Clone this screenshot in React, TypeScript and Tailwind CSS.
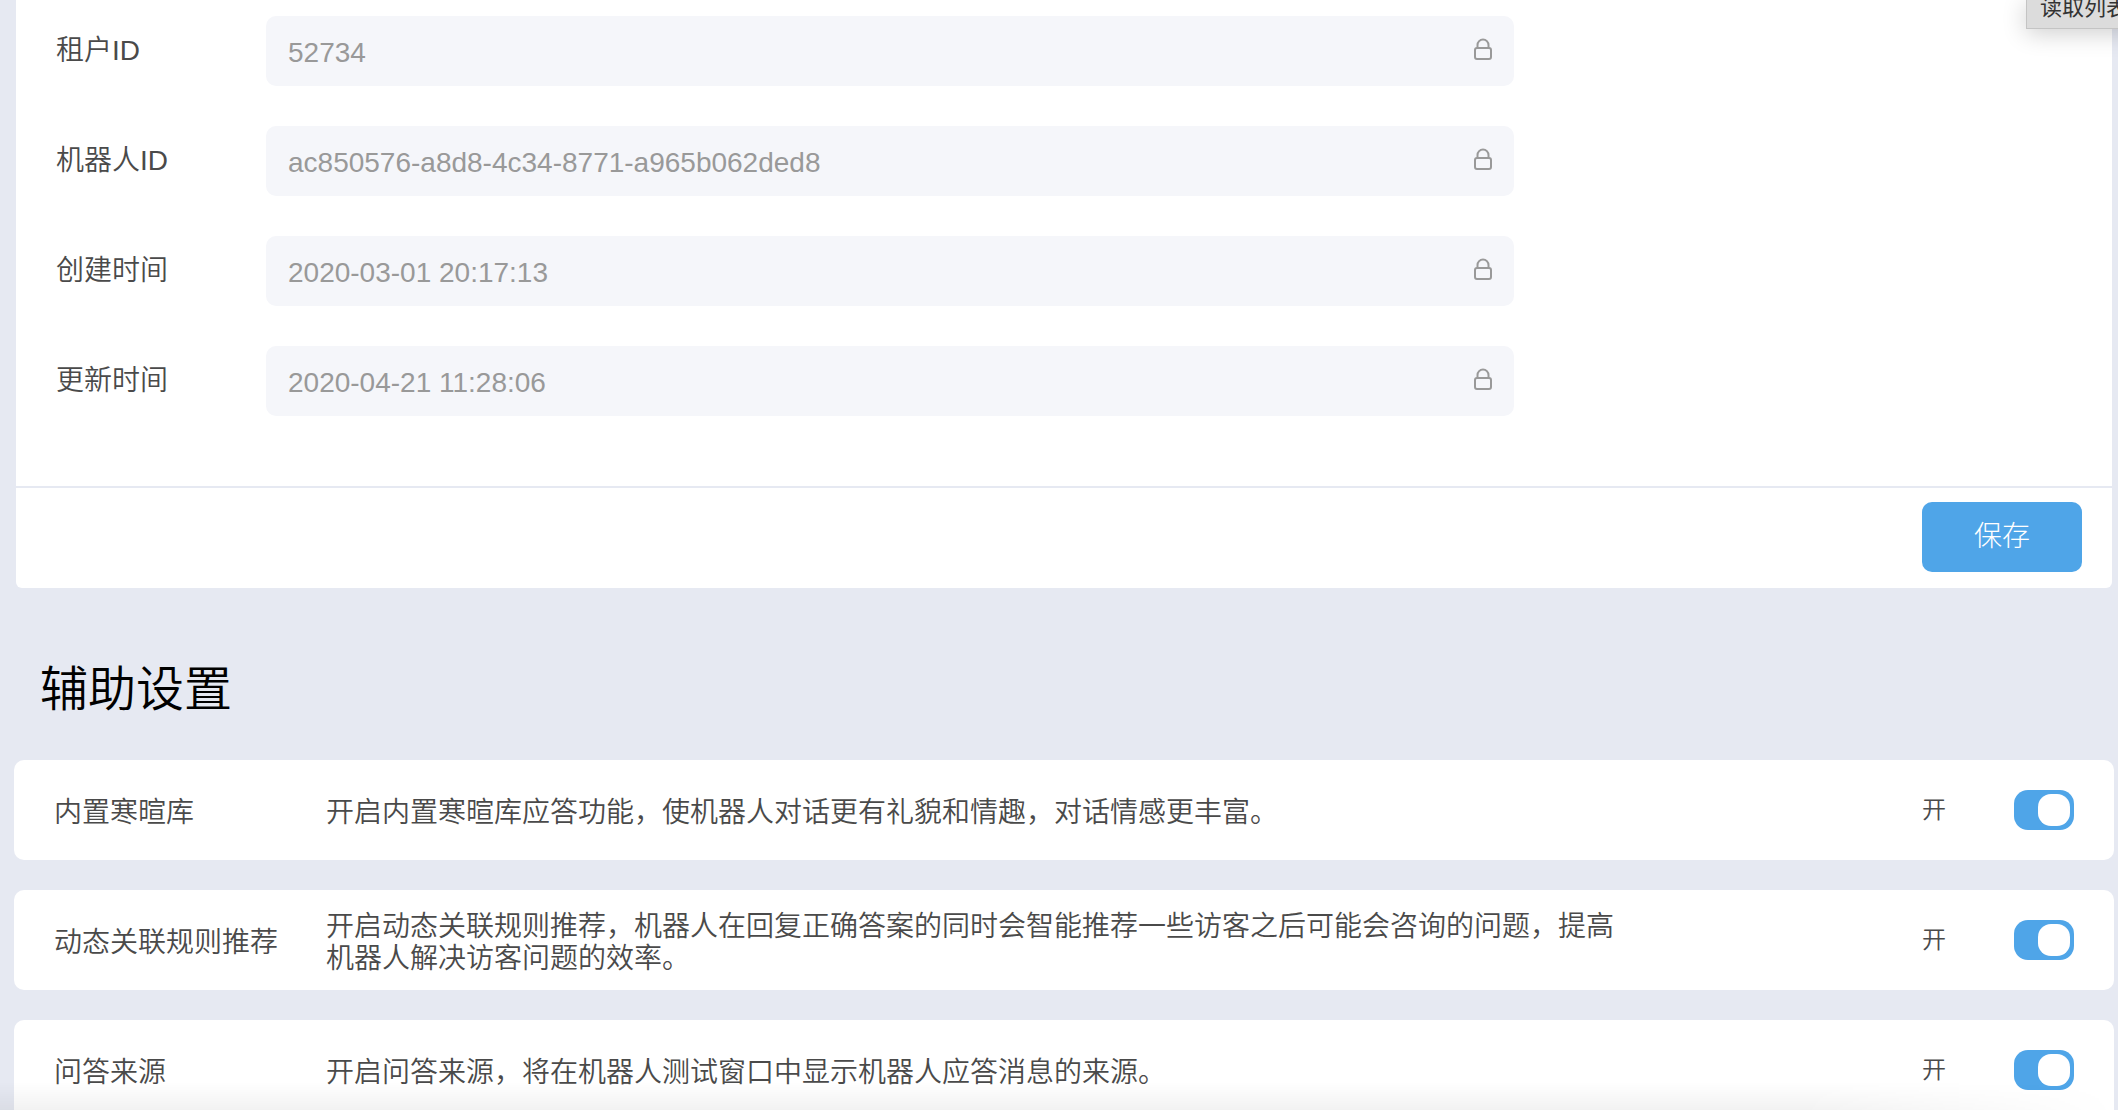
import { useState } from "react";

const fields = [
  { id: "tenant-id", label: "租户ID", value: "52734" },
  { id: "robot-id", label: "机器人ID", value: "ac850576-a8d8-4c34-8771-a965b062ded8" },
  { id: "created-at", label: "创建时间", value: "2020-03-01 20:17:13" },
  { id: "updated-at", label: "更新时间", value: "2020-04-21 11:28:06" },
];

const settings = [
  {
    id: "greeting",
    title: "内置寒暄库",
    desc: "开启内置寒暄库应答功能，使机器人对话更有礼貌和情趣，对话情感更丰富。",
  },
  {
    id: "related",
    title: "动态关联规则推荐",
    desc: "开启动态关联规则推荐，机器人在回复正确答案的同时会智能推荐一些访客之后可能会咨询的问题，提高机器人解决访客问题的效率。",
  },
  {
    id: "source",
    title: "问答来源",
    desc: "开启问答来源，将在机器人测试窗口中显示机器人应答消息的来源。",
  },
];

const LockIcon = () => (
  <svg className="mb-1" width="18" height="22" viewBox="0 0 18 22" fill="none" stroke="#999" strokeWidth="2" aria-hidden="true">
    <path d="M3.5 10V7a5.5 5.5 0 0 1 11 0v3" />
    <rect x="1" y="10" width="16" height="11" rx="2" />
  </svg>
);

const Field = ({ id, label, value }: { id: string; label: string; value: string }) => (
  <div className="flex items-center">
    <label htmlFor={id} className="w-[210px] shrink-0 text-[28px] leading-8 text-[#4a4a4a]">
      {label}
    </label>
    <div className="flex h-[70px] max-w-[1248px] flex-1 items-center rounded-[10px] bg-[#f5f6fa] pl-[22px] pr-[22px]">
      <input
        id={id}
        readOnly
        value={value}
        className="h-full min-w-0 flex-1 bg-transparent pt-1 text-[28px] text-[#999] outline-none"
      />
      <LockIcon />
    </div>
  </div>
);

const SettingRow = ({ id, title, desc }: { id: string; title: string; desc: string }) => {
  const [on, setOn] = useState(true);
  return (
    <div className="flex min-h-[100px] shrink-0 items-center rounded-[10px] bg-white pl-10 pr-10 text-[#4a4a4a]">
      <label htmlFor={id} className="w-[272px] shrink-0 pt-1.5 text-[28px] leading-8">
        {title}
      </label>
      <div className="min-w-0 flex-1 pt-1.5">
        <p className="max-w-[1296px] text-[28px] leading-8">{desc}</p>
      </div>
      <span className="w-[92px] shrink-0 text-2xl leading-8">{on ? "开" : "关"}</span>
      <label className="flex h-10 w-[60px] shrink-0 cursor-pointer items-center rounded-[14px] bg-gray-300 p-1 has-checked:justify-end has-checked:bg-[#4fa5e8]">
        <input
          id={id}
          type="checkbox"
          role="switch"
          checked={on}
          onChange={(e) => setOn(e.target.checked)}
          className="size-8 appearance-none rounded-[13px] bg-white"
        />
      </label>
    </div>
  );
};

export default function App() {
  return (
    <div className="relative h-screen overflow-hidden bg-[#e6e9f2] pl-3.5 pr-1 font-['Liberation_Sans','Noto_Sans_CJK_SC',sans-serif] font-[350]">
      <section className="ml-0.5 mr-0.5 rounded-b-md bg-white">
        <div className="flex flex-col gap-10 px-10 pb-[70px] pt-4">
          {fields.map((f) => (
            <Field key={f.id} {...f} />
          ))}
        </div>
        <div className="flex justify-end border-t-2 border-[#e6e9f2] py-3.5 pb-4 pr-[30px]">
          <button type="button" className="h-[70px] w-40 rounded-[10px] bg-[#4fa5e8] text-[28px] font-light text-white">
            保存
          </button>
        </div>
      </section>

      <h2 className="pl-[26px] pt-[70px] text-5xl leading-16 text-black">辅助设置</h2>

      <div className="mt-[38px] flex flex-col gap-[30px]">
        {settings.map((s) => (
          <SettingRow key={s.id} {...s} />
        ))}
      </div>

      {/* floating tooltip */}
      <div className="absolute left-full top-0 -ml-[92px] h-[29px] w-40 whitespace-nowrap border border-t-0 border-[#c4c4c4] bg-[#dcdcdc] pl-[13px] shadow-[0_4px_24px_rgba(0,0,0,0.2)]">
        <span className="-mt-2 block text-[22px] leading-8 font-normal text-[#333]">读取列表</span>
      </div>
      <div className="pointer-events-none absolute bottom-0 left-0 h-7 w-full bg-linear-to-b from-transparent to-black/5 mask-r-from-85%" />
    </div>
  );
}
